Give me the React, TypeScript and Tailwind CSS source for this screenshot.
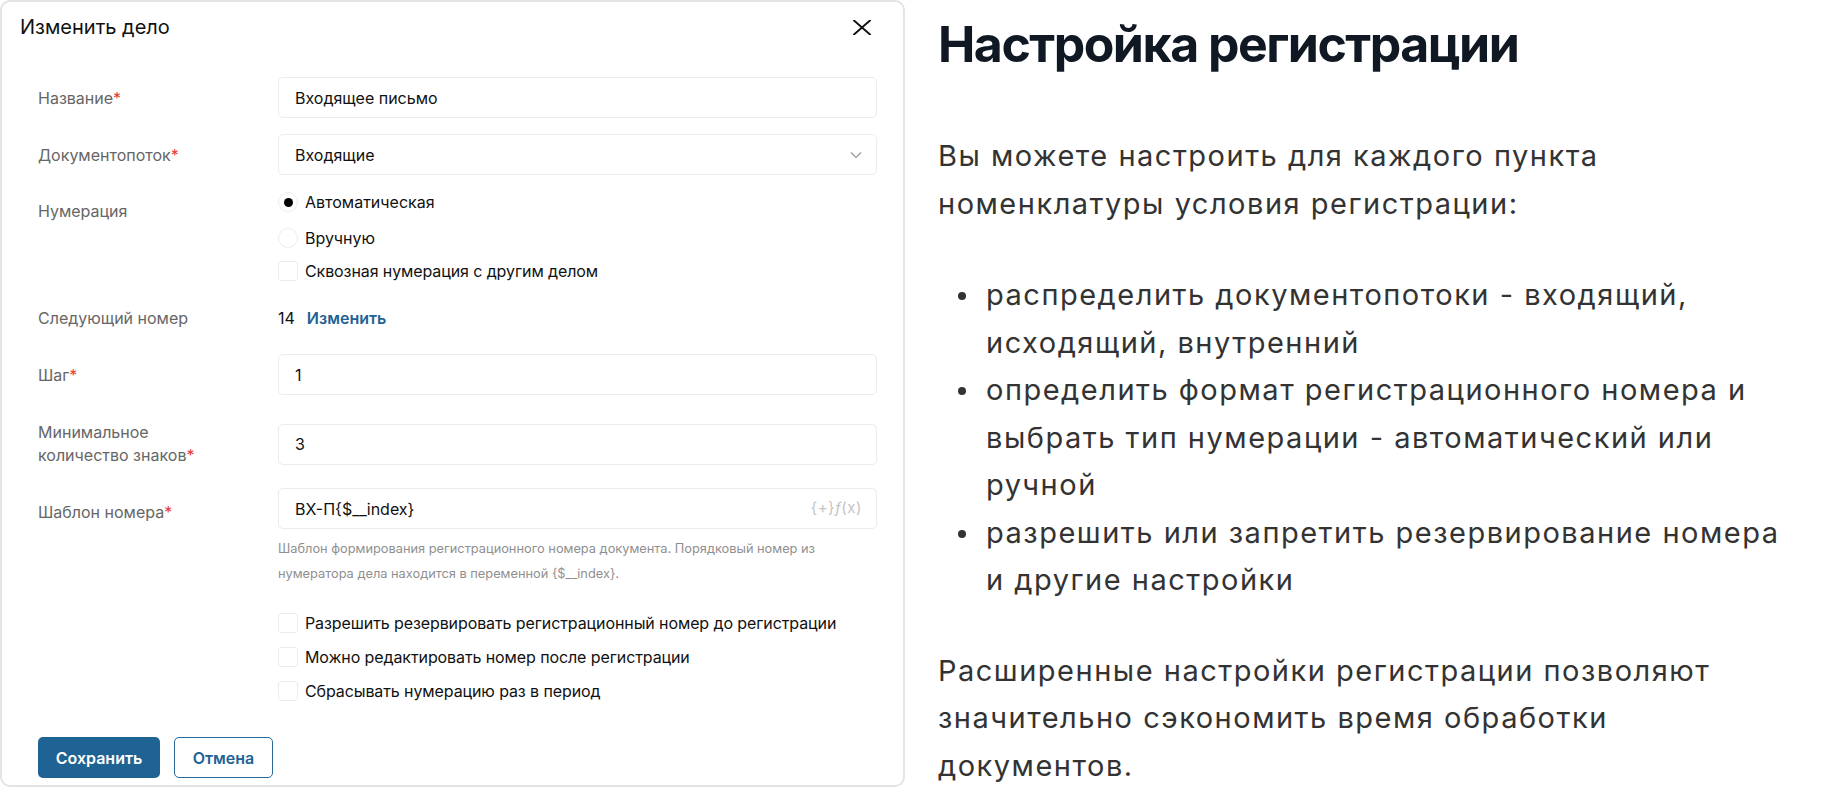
import React from "react";

function Label({ children, required }: { children: React.ReactNode; required?: boolean }) {
  return (
    <div className="w-[240px] shrink-0 text-[16px] leading-[24px] text-[#666666]">
      {children}
      {required && <span className="text-[#e53935]">*</span>}
    </div>
  );
}

function Radio({ checked, label }: { checked?: boolean; label: string }) {
  return (
    <div className="flex items-center h-[36px]">
      <span className="w-[20px] h-[20px] rounded-full border border-[#ececec] flex items-center justify-center shrink-0">
        {checked && <span className="w-[9px] h-[9px] rounded-full bg-black" />}
      </span>
      <span className="ml-[7px] text-[16px] leading-[24px] text-[#111111]">{label}</span>
    </div>
  );
}

function Check({ label, h }: { label: string; h: string }) {
  return (
    <div className={`flex items-center ${h}`}>
      <span className="w-[20px] h-[20px] rounded-[3px] border border-[#ececec] shrink-0" />
      <span className="ml-[7px] text-[16px] leading-[24px] tracking-[-0.1px] text-[#111111]">{label}</span>
    </div>
  );
}

function Input({ children, right }: { children: React.ReactNode; right?: React.ReactNode }) {
  return (
    <div className="w-[599px] h-[41px] shrink-0 border border-[#ececec] rounded-[5px] pl-[16px] pr-[14px] flex items-center justify-between text-[16px] text-[#111111]">
      <span>{children}</span>
      {right}
    </div>
  );
}

export default function App() {
  return (
    <div className="flex w-[1840px] h-[788px] bg-white overflow-hidden font-['Inter',sans-serif]">
      <div className="w-[905px] h-[787px] shrink-0 border-2 border-[#e4e4e4] rounded-[10px] flex flex-col">
        <div className="h-[50px] flex items-center justify-between pl-[18px] pr-[32px]">
          <span className="text-[20px] text-[#111111]">Изменить дело</span>
          <svg width="18" height="15" viewBox="0 0 18 15" className="block">
            <path d="M1 0.5 L17 14.5 M17 0.5 L1 14.5" stroke="#111" strokeWidth="1.9" strokeLinecap="round" />
          </svg>
        </div>

        <div className="flex flex-col pl-[36px]">
          <div className="flex items-center mt-[25px]">
            <Label required>Название</Label>
            <Input>Входящее письмо</Input>
          </div>

          <div className="flex items-center mt-[16px]">
            <Label required>Документопоток</Label>
            <Input
              right={
                <svg width="12" height="8" viewBox="0 0 12 8">
                  <path d="M1 1.5 L6 6.5 L11 1.5" stroke="#999" strokeWidth="1.2" fill="none" />
                </svg>
              }
            >
              Входящие
            </Input>
          </div>

          <div className="flex items-start mt-[9px]">
            <div className="pt-[15px]">
              <Label>Нумерация</Label>
            </div>
            <div className="flex flex-col">
              <Radio checked label="Автоматическая" />
              <Radio label="Вручную" />
              <Check label="Сквозная нумерация с другим делом" h="h-[30px]" />
            </div>
          </div>

          <div className="flex items-center mt-[20px] h-[24px]">
            <Label>Следующий номер</Label>
            <span className="text-[16px] text-[#111111]">14</span>
            <span className="ml-[12px] text-[16px] font-semibold text-[#1f6294]">Изменить</span>
          </div>

          <div className="flex items-center mt-[24px]">
            <Label required>Шаг</Label>
            <Input>1</Input>
          </div>

          <div className="flex items-center mt-[26px]">
            <div className="w-[240px] shrink-0 text-[16px] leading-[23px] text-[#666666]">
              Минимальное
              <br />
              количество знаков<span className="text-[#e53935]">*</span>
            </div>
            <Input>3</Input>
          </div>

          <div className="flex items-start mt-[21px]">
            <div className="pt-[12px]">
              <Label required>Шаблон номера</Label>
            </div>
            <Input right={<span className="text-[15px] text-[#c4c4c4] tracking-[0.5px]">{"{+}"}<i>ƒ</i>(x)</span>}>
              ВХ-П{"{$__index}"}
            </Input>
          </div>

          <div className="ml-[240px] mt-[7px] text-[12.8px] leading-[25px] text-[#8f8f8f] whitespace-nowrap">
            Шаблон формирования регистрационного номера документа. Порядковый номер из
            <br />
            нумератора дела находится в переменной {"{$__index}"}.
          </div>

          <div className="ml-[240px] mt-[20px] flex flex-col">
            <Check label="Разрешить резервировать регистрационный номер до регистрации" h="h-[34px]" />
            <Check label="Можно редактировать номер после регистрации" h="h-[34px]" />
            <Check label="Сбрасывать нумерацию раз в период" h="h-[34px]" />
          </div>

          <div className="flex mt-[29px] gap-[14px]">
            <button className="w-[122px] h-[41px] rounded-[5px] bg-[#1f6294] text-white text-[16px] font-semibold">
              Сохранить
            </button>
            <button className="w-[99px] h-[41px] rounded-[5px] border border-[#2a6899] bg-white text-[#1f6294] text-[16px] font-semibold">
              Отмена
            </button>
          </div>
        </div>
      </div>

      <div className="ml-[33px] pt-[14px] flex flex-col whitespace-nowrap">
        <h1 className="text-[50px] leading-[60px] font-bold tracking-[-1.5px] text-[#0f1823]">Настройка регистрации</h1>
        <p className="mt-[58px] text-[29px] leading-[47.5px] tracking-[1.5px] text-[#333333]">
          Вы можете настроить для каждого пункта
          <br />
          номенклатуры условия регистрации:
        </p>
        <ul className="mt-[44px] text-[29px] leading-[47.5px] tracking-[1.5px] text-[#333333]">
          {[
            ["распределить документопотоки - входящий,", "исходящий, внутренний"],
            ["определить формат регистрационного номера и", "выбрать тип нумерации - автоматический или", "ручной"],
            ["разрешить или запретить резервирование номера", "и другие настройки"],
          ].map((lines, i) => (
            <li key={i} className="flex items-start">
              <span className="ml-[20px] mt-[21px] w-[8px] h-[8px] rounded-full bg-[#333333] shrink-0" />
              <span className="ml-[20px]">
                {lines.map((l, j) => (
                  <React.Fragment key={j}>
                    {j > 0 && <br />}
                    {l}
                  </React.Fragment>
                ))}
              </span>
            </li>
          ))}
        </ul>
        <p className="mt-[43px] text-[29px] leading-[47.5px] tracking-[1.5px] text-[#333333]">
          Расширенные настройки регистрации позволяют
          <br />
          значительно сэкономить время обработки
          <br />
          документов.
        </p>
      </div>
    </div>
  );
}
